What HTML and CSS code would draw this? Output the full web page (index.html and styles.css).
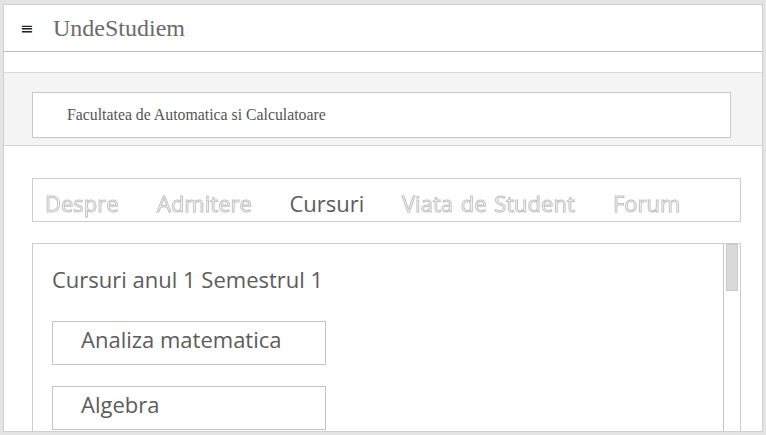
FILE: index.html
```html
<!DOCTYPE html>
<html lang="ro">
<head>
<meta charset="utf-8">
<title>UndeStudiem</title>
<link rel="stylesheet" href="styles.css">
</head>
<body>
<div class="window">
  <header class="topbar">
    <span class="burger">&#8801;</span>
    <span class="brand">UndeStudiem</span>
  </header>
  <div class="spacer"></div>
  <section class="band">
    <div class="faculty">Facultatea de Automatica si Calculatoare</div>
  </section>
  <main class="main">
    <nav class="tabs">
      <a class="tab ghost">Despre</a>
      <a class="tab ghost">Admitere</a>
      <a class="tab active">Cursuri</a>
      <a class="tab ghost wide">Viata de Student</a>
      <a class="tab ghost">Forum</a>
    </nav>
    <div class="panel">
      <div class="panel-body">
        <h2 class="panel-title">Cursuri anul 1 Semestrul 1</h2>
        <div class="course">Analiza matematica</div>
        <div class="course">Algebra</div>
      </div>
      <div class="scrollbar"><div class="thumb"></div></div>
    </div>
  </main>
</div>
</body>
</html>
```
FILE: styles.css
```css
html, body {
  margin: 0;
  padding: 0;
}
body {
  background: #e4e4e4;
  width: 766px;
  height: 435px;
  overflow: hidden;
  padding: 4px 3px 0 3px;
  box-sizing: border-box;
}
.window {
  background: #fff;
  border: 1px solid #cfcfcf;
  height: 428px;
  box-sizing: border-box;
  overflow: hidden;
}
.topbar {
  height: 47px;
  border-bottom: 1px solid #bdbdbd;
  display: flex;
  align-items: center;
  box-sizing: border-box;
}
.burger {
  font-family: "DejaVu Sans", sans-serif;
  font-size: 16px;
  color: #222;
  margin-left: 16px;
  width: 33px;
}
.brand {
  font-family: "Liberation Serif", serif;
  font-size: 24px;
  color: #6b6b6b;
}
.spacer {
  height: 20px;
}
.band {
  background: #f4f4f4;
  border-top: 1px solid #dcdcdc;
  border-bottom: 1px solid #d4d4d4;
  padding: 19px 31px 7px 28px;
}
.faculty {
  background: #fff;
  border: 1px solid #c8c8c8;
  height: 46px;
  box-sizing: border-box;
  display: flex;
  align-items: center;
  padding-left: 34px;
  font-family: "Liberation Serif", serif;
  font-size: 15.8px;
  color: #555;
}
.main {
  padding: 32px 21px 0 28px;
}
.tabs {
  border: 1px solid #cccccc;
  height: 44px;
  box-sizing: border-box;
  display: flex;
  align-items: flex-start;
  padding: 9px 0 0 12px;
  gap: 38px;
  font-family: "Open Sans", sans-serif;
  font-size: 22px;
}
.tab {
  line-height: 30px;
  text-decoration: none;
}
.ghost {
  color: #fff;
  -webkit-text-stroke: 1px #c2c2c2;
  will-change: transform;
}
.wide {
  word-spacing: 2px;
}
.active {
  color: #5c5c5c;
}
.panel {
  margin-top: 21px;
  border: 1px solid #cccccc;
  height: 220px;
  display: flex;
}
.panel-body {
  flex: 1;
  padding: 0 0 0 19px;
}
.panel-title {
  margin: 20px 0 27px 0;
  font-family: "Open Sans", sans-serif;
  font-weight: normal;
  font-size: 22px;
  color: #5c5c5c;
  line-height: 30px;
}
.course {
  width: 274px;
  height: 44px;
  box-sizing: border-box;
  border: 1px solid #c4c4c4;
  padding: 2px 0 0 28px;
  font-family: "Open Sans", sans-serif;
  font-size: 22px;
  color: #5c5c5c;
  line-height: 30px;
  margin-bottom: 21px;
}
.scrollbar {
  width: 12px;
  border-left: 1px solid #c4c4c4;
  padding: 0 2px;
}
.thumb {
  width: 12px;
  height: 47px;
  background: #dadada;
  border: 1px solid #c8c8c8;
  box-sizing: border-box;
}
```
